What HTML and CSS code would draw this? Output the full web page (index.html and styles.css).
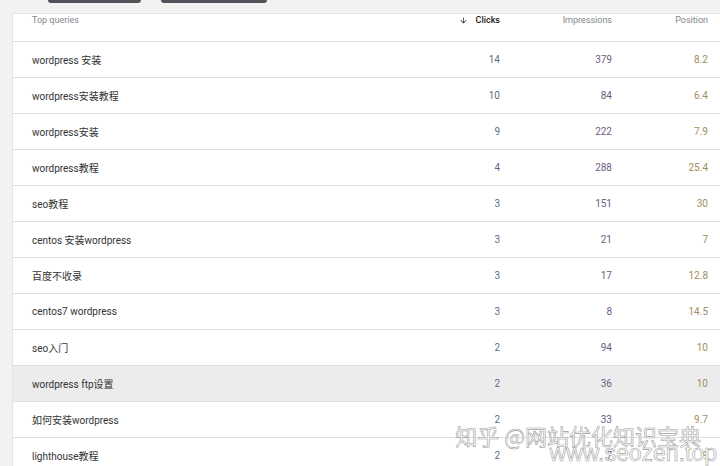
FILE: index.html
```html
<!DOCTYPE html>
<html lang="zh-CN">
<head>
  <meta charset="UTF-8">
  <title>Top queries</title>
  <link rel="stylesheet" href="styles.css">
</head>
<body>
  <div class="topbar">
    <span class="tab tab-one"></span>
    <span class="tab tab-two"></span>
  </div>
  <div class="card">
    <div class="row head">
      <div class="cell query">Top queries</div>
      <div class="cell num sorted">
        <svg width="9" height="9" viewBox="0 0 24 24"><path d="M20 12l-1.41-1.41L13 16.17V4h-2v12.17l-5.58-5.59L4 12l8 8 8-8z" fill="#333"/></svg>
        Clicks
      </div>
      <div class="cell num">Impressions</div>
      <div class="cell num">Position</div>
    </div>

    <div class="row"><div class="cell query">wordpress 安装</div><div class="cell num clicks">14</div><div class="cell num impr">379</div><div class="cell num pos">8.2</div></div>
    <div class="row"><div class="cell query">wordpress安装教程</div><div class="cell num clicks">10</div><div class="cell num impr">84</div><div class="cell num pos">6.4</div></div>
    <div class="row"><div class="cell query">wordpress安装</div><div class="cell num clicks">9</div><div class="cell num impr">222</div><div class="cell num pos">7.9</div></div>
    <div class="row"><div class="cell query">wordpress教程</div><div class="cell num clicks">4</div><div class="cell num impr">288</div><div class="cell num pos">25.4</div></div>
    <div class="row"><div class="cell query">seo教程</div><div class="cell num clicks">3</div><div class="cell num impr">151</div><div class="cell num pos">30</div></div>
    <div class="row"><div class="cell query">centos 安装wordpress</div><div class="cell num clicks">3</div><div class="cell num impr">21</div><div class="cell num pos">7</div></div>
    <div class="row"><div class="cell query">百度不收录</div><div class="cell num clicks">3</div><div class="cell num impr">17</div><div class="cell num pos">12.8</div></div>
    <div class="row"><div class="cell query">centos7 wordpress</div><div class="cell num clicks">3</div><div class="cell num impr">8</div><div class="cell num pos">14.5</div></div>
    <div class="row"><div class="cell query">seo入门</div><div class="cell num clicks">2</div><div class="cell num impr">94</div><div class="cell num pos">10</div></div>
    <div class="row hover"><div class="cell query">wordpress ftp设置</div><div class="cell num clicks">2</div><div class="cell num impr">36</div><div class="cell num pos">10</div></div>
    <div class="row"><div class="cell query">如何安装wordpress</div><div class="cell num clicks">2</div><div class="cell num impr">33</div><div class="cell num pos">9.7</div></div>
    <div class="row"><div class="cell query">lighthouse教程</div><div class="cell num clicks">2</div><div class="cell num impr">7</div><div class="cell num pos">9</div></div>
  </div>

  <div class="watermark">
    <div class="wm-line wm-one">知乎 @网站优化知识宝典</div>
    <div class="wm-line wm-two">www.seozen.top</div>
  </div>
</body>
</html>
```

FILE: styles.css
```css
body {
  margin: 0;
  background: #f2f2f2;
  font-family: Roboto, "Noto Sans CJK SC", sans-serif;
  color: #333;
  overflow: hidden;
}

/* strip above the card, only the bottoms of two buttons show */
.topbar { height: 13px; display: flex; align-items: flex-start; }
.tab { display: block; height: 3px; background: #505357; border-radius: 0 0 5px 5px; }
.tab-one { margin-left: 48px; width: 93px; }
.tab-two { margin-left: 20px; width: 106px; }

.card {
  margin-left: 12px;
  background: #fff;
  border-left: 1px solid #e3e3e3;
  border-top: 1px solid #e6e6e6;
}

.row {
  display: grid;
  grid-template-columns: 1fr 100px 112px 96px;
  padding-right: 12px;
  height: 35px;
  align-items: center;
  border-bottom: 1px solid #e0e0e0;
  font-size: 10px;
}
.row.hover { background: #ececec; }

.head { height: 26px; align-items: start; padding-top: 1px; font-size: 9px; color: #80868b; }
.head .sorted { color: #222; font-weight: 500; display: flex; justify-content: flex-end; align-items: center; gap: 8px; }

.query { padding-left: 19px; }
.num { text-align: right; }

.clicks { color: #5d6d86; }
.impr { color: #6c5c84; }
.pos { color: #a58b5c; }

/* zhihu watermark over the table */
.watermark {
  position: absolute;
  right: 3px;
  top: 423px;
  text-align: right;
  color: #fff;
  font-family: "Noto Sans CJK SC", "Liberation Sans", sans-serif;
  -webkit-text-stroke: 0.6px #a0a0a0;
}
.wm-one { font-size: 22px; padding-right: 16px; line-height: 24px; }
.wm-two { font-size: 23px; font-family: "Liberation Sans", sans-serif; line-height: 12px; }
```
